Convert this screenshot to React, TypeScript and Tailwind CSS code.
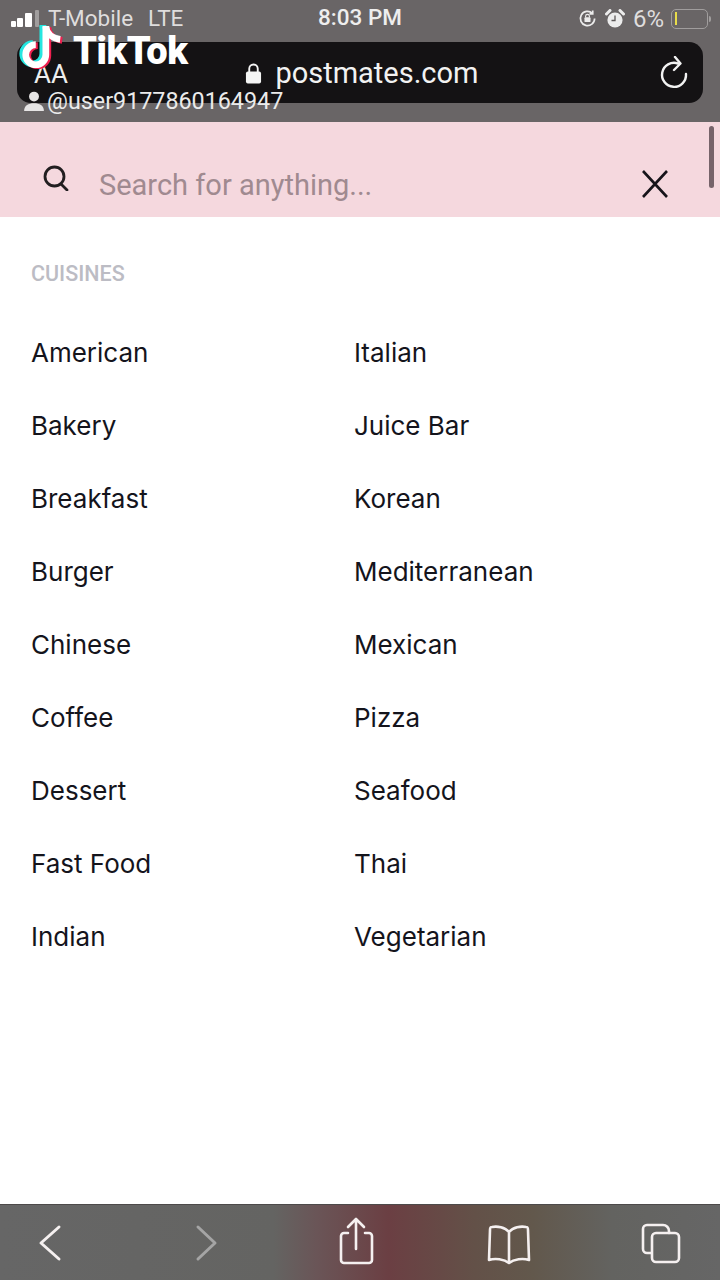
import React from 'react';

const leftCuisines = ['American', 'Bakery', 'Breakfast', 'Burger', 'Chinese', 'Coffee', 'Dessert', 'Fast Food', 'Indian'];
const rightCuisines = ['Italian', 'Juice Bar', 'Korean', 'Mediterranean', 'Mexican', 'Pizza', 'Seafood', 'Thai', 'Vegetarian'];

function TikTokNote({ color, className }: { color: string; className: string }) {
  return (
    <svg viewBox="0 0 48 54" className={className} fill="none">
      <path d="M28 5v30a10.500 10.500 0 1 1-10.500-10.500" stroke={color} strokeWidth="7" />
      <path d="M28 6c1 7 7 12 15 13" stroke={color} strokeWidth="7" />
    </svg>
  );
}

function StatusBar() {
  return (
    <div className="flex h-[42px] items-center justify-between pb-[5px] pl-[11px] pr-[9px] text-[22.5px] text-[#dfdddd]">
      <div className="flex items-center">
        <div className="flex items-end">
          <span className="h-[6px] w-[5px] rounded-[1px] bg-white" />
          <span className="ml-[1px] h-[9px] w-[6px] rounded-[1px] bg-white" />
          <span className="ml-[2px] h-[14px] w-[7px] rounded-[1px] bg-white" />
          <span className="ml-[3px] h-[17px] w-[4px] rounded-[1px] bg-[#a09d9d]" />
        </div>
        <span className="ml-[9px]">T-Mobile</span>
        <span className="ml-[15px]">LTE</span>
      </div>
      <span className="absolute left-[318px] top-[1px] text-[22.5px] font-medium text-[#eeeeee]">8:03 PM</span>
      <div className="flex items-center">
        <svg viewBox="0 0 20 20" className="h-[19px] w-[19px]" fill="none" stroke="#ececec" strokeWidth="1.8">
          <path d="M17.500 10a7.500 7.500 0 1 1-2.400-5.500" />
          <path d="M15.500 1.500v3.600h-3.400" />
          <rect x="6.800" y="8.800" width="6.400" height="5" rx="1" fill="#ececec" stroke="none" />
          <path d="M8 9V7.600a2 2 0 0 1 4 0V9" strokeWidth="1.200" />
        </svg>
        <svg viewBox="0 0 20 20" className="ml-[8px] h-[20px] w-[20px]">
          <circle cx="10" cy="11" r="7.600" fill="#ececec" />
          <path d="M10 6.500V11.500H6.500" fill="none" stroke="#5c5858" strokeWidth="1.300" />
          <path d="M1.500 5 5 1.500M18.500 5 15 1.500" stroke="#ececec" strokeWidth="3" strokeLinecap="round" />
        </svg>
        <span className="ml-[8px] text-[24px]">6%</span>
        <div className="ml-[7px] flex h-[20px] w-[37px] items-center rounded-[5px] border border-[#a09d9d] pl-[3px]">
          <span className="h-[13px] w-[2px] bg-[#e8dc4a]" />
        </div>
        <span className="ml-[1px] h-[6px] w-[2px] rounded-r-sm bg-[#a09d9d]" />
      </div>
    </div>
  );
}

function UrlBar() {
  return (
    <div className="mx-[17px] flex h-[61px] items-center justify-between rounded-[14px] bg-[#141214] pl-[17px] pr-[14px] text-white">
      <span className="pt-[3px] text-[26px] leading-none text-[#eeeeee]">AA</span>
      <div className="flex items-center gap-[13px] pr-[3px] pt-[1px]">
        <svg viewBox="0 0 18 22" className="h-[23px] w-[17px]" fill="none">
          <rect x="1" y="9" width="16" height="12.500" rx="2" fill="#f5f5f5" />
          <path d="M4.500 10V6a4.500 4.500 0 0 1 9 0v4" stroke="#f5f5f5" strokeWidth="2" />
        </svg>
        <span className="text-[29px] leading-none text-[#f2f2f2]">postmates.com</span>
      </div>
      <svg viewBox="0 0 30 34" className="h-[34px] w-[30px]" fill="none" stroke="#f2f2f2" strokeWidth="2.400" strokeLinecap="round" strokeLinejoin="round">
        <path d="M19 7.500A12 12 0 1 0 27 18" />
        <path d="M16 1l5.500 6.500-6.500 6.500" />
      </svg>
    </div>
  );
}

function BottomBar() {
  return (
    <div className="mt-auto h-[76px] border-t border-[#4d4a4a] bg-[linear-gradient(90deg,#666666_0%,#646462_38%,#6a5557_44%,#6b3f43_54%,#635148_66%,#62584c_74%,#636360_85%,#666666_100%)]">
      <svg viewBox="0 0 720 75" className="h-[75px] w-[720px]" fill="none" stroke="#f5f0f0" strokeWidth="2.600" strokeLinecap="round" strokeLinejoin="round">
        <path d="M59 22 41 38 59 54" strokeWidth="3" />
        <path d="M198 22 215 38 198 54" stroke="#a5a5a5" strokeWidth="3" />
        <path d="M348 28h-4a3 3 0 0 0-3 3v24a3 3 0 0 0 3 3h25a3 3 0 0 0 3-3V31a3 3 0 0 0-3-3h-4" />
        <path d="M356 44V15M348 22l8-8 8 8" />
        <path d="M509 27c-4-5-12-6-17-5-2 0-2 1-2 3l-1 30c6-2 15-1 20 3 5-4 14-5 20-3l-1-30c0-2 0-3-2-3-5-1-13 0-17 5zM509 27v29" />
        <path d="M651 48h-4a4 4 0 0 1-4-4V24a4 4 0 0 1 4-4h16a6 6 0 0 1 6 6v2" />
        <rect x="652" y="28" width="27" height="29" rx="4" />
      </svg>
    </div>
  );
}

function App() {
  return (
    <div className="relative flex h-[1280px] w-[720px] flex-col overflow-hidden bg-white font-['Roboto',sans-serif]">
      <header className="relative h-[122px] bg-[#696566]">
        <StatusBar />
        <UrlBar />
      </header>

      <div className="flex h-[95px] items-center bg-[#f5d8de] pl-[43px] pr-[51px] pt-[28px]">
        <svg viewBox="0 0 26 26" className="mb-[11px] h-[26px] w-[26px]" fill="none" stroke="#221e20" strokeWidth="2.800" strokeLinecap="round">
          <circle cx="11.500" cy="11.500" r="9.500" />
          <path d="M18 19l6 6" />
        </svg>
        <span className="ml-[30px] flex-1 pt-[4px] text-[29px] leading-none text-[#a08a90]">Search for anything...</span>
        <svg viewBox="0 0 28 28" className="h-[28px] w-[28px]" fill="none" stroke="#17141a" strokeWidth="2.600">
          <path d="M2 1l24 26M26 1 2 27" />
        </svg>
      </div>

      <main className="px-[31px] pt-[45px]">
        <h2 className="text-[21.500px] font-medium leading-[24px] text-[#bcbcc4]">CUISINES</h2>
        <div className="mt-[30px] grid grid-cols-[323px_1fr] font-['Inter',sans-serif] text-[26px] leading-[73px] text-[#14141c]">
          <ul>
            {leftCuisines.map((name) => (
              <li key={name}>{name}</li>
            ))}
          </ul>
          <ul>
            {rightCuisines.map((name) => (
              <li key={name}>{name}</li>
            ))}
          </ul>
        </div>
      </main>

      <BottomBar />

      {/* scroll indicator on top of the search strip */}
      <div className="absolute left-[709px] top-[126px] h-[62px] w-[5px] rounded-full bg-[#76636a]" />

      {/* TikTok watermark floats over the browser chrome */}
      <div className="absolute left-[16px] top-[20px] h-[54px] w-[52px]">
        <TikTokNote color="#25e6e0" className="absolute left-0 top-[0px] h-[52px] w-[46px]" />
        <TikTokNote color="#f0204f" className="absolute left-[5px] top-[2px] h-[52px] w-[46px]" />
        <TikTokNote color="#ffffff" className="absolute left-[3px] top-[1px] h-[52px] w-[46px]" />
      </div>
      <span className="absolute left-[73px] top-[29px] text-[38px] font-black leading-[44px] tracking-[-0.5px] text-white">TikTok</span>
      <div className="absolute left-[23px] top-[89px] flex items-center">
        <svg viewBox="0 0 20 20" className="h-[22px] w-[22px]" fill="#e6e4e4">
          <circle cx="10" cy="6" r="4.500" />
          <path d="M1 19c0-5 4-7 9-7s9 2 9 7z" />
        </svg>
        <span className="ml-[2px] text-[23.3px] leading-[24px] text-[#ebebeb]">@user9177860164947</span>
      </div>
    </div>
  );
}

export default App;
